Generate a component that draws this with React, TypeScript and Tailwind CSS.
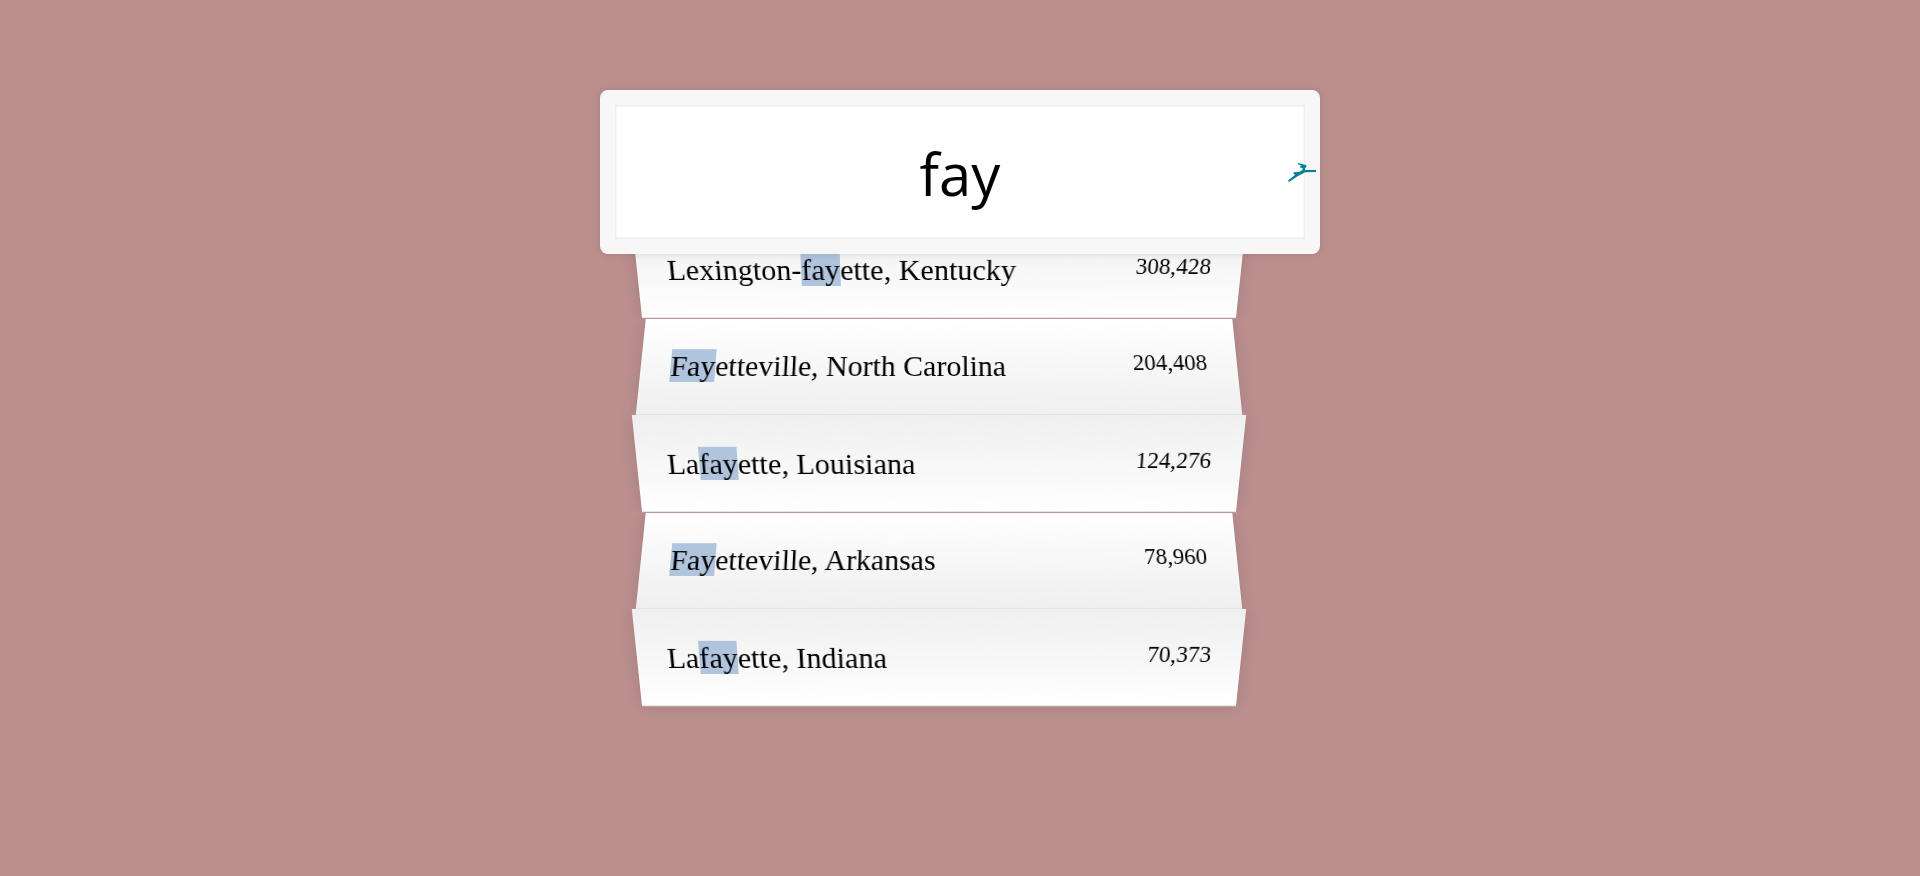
import { useState } from "react";

type Place = { before: string; match: string; after: string; population: string };

const places: Place[] = [
  { before: "Lexington-", match: "fay", after: "ette, Kentucky", population: "308,428" },
  { before: "", match: "Fay", after: "etteville, North Carolina", population: "204,408" },
  { before: "La", match: "fay", after: "ette, Louisiana", population: "124,276" },
  { before: "", match: "Fay", after: "etteville, Arkansas", population: "78,960" },
  { before: "La", match: "fay", after: "ette, Indiana", population: "70,373" },
];

function Suggestion({ place }: { place: Place }) {
  return (
    <li className="flex items-start justify-between border-b border-[#d8d8d8] p-[30px] shadow-[0_0_15px_rgba(0,0,0,0.14)] [clip-path:inset(0_-20px)] last:[clip-path:inset(0_-20px_-20px)] odd:bg-linear-to-t odd:from-white odd:to-[#efefef] odd:[transform:perspective(150px)_rotateX(-3deg)_translateY(4px)_scale(1.008)] even:bg-linear-to-b even:from-white even:to-[#efefef] even:[transform:perspective(150px)_rotateX(3deg)_translateY(3px)_scale(0.993)]">
      <span className="text-[30px] leading-9">
        {place.before}
        <mark className="bg-[#b0c4de] text-black">{place.match}</mark>
        {place.after}
      </span>
      <span className="text-[23px] leading-[30px]">{place.population}</span>
    </li>
  );
}

function Bird() {
  return (
    <svg
      className="pointer-events-none absolute right-1 top-[73px] h-5 w-7"
      viewBox="0 0 28 20"
      fill="#007f99"
      aria-hidden="true"
    >
      <path d="M10 0 L18 2 L18.500 4 L17 5 L17 7 L28 7 L28 9 L17 9.200 L14 11 L10 13 L1 19 L0 17.500 L7 12 L5.500 10.500 L5.500 9.300 L11 9 L14.500 7 L14.500 5 L12 4.500 L12 3.300 L14 3 L10 1.300 Z" />
    </svg>
  );
}

export default function App() {
  const [query, setQuery] = useState("fay");

  return (
    <main className="min-h-screen bg-[#bc8f8f] px-4 pt-[90px] font-['Liberation_Serif',serif] text-black">
      <form className="mx-auto max-w-[720px]" onSubmit={(e) => e.preventDefault()}>
        <div className="relative z-10">
          <input
            type="text"
            aria-label="City or State"
            placeholder="City or State"
            spellCheck={false}
            value={query}
            onChange={(e) => setQuery(e.target.value)}
            className="block h-[164px] w-full rounded-lg border-[15px] border-[#f7f7f7] bg-white px-[30px] pt-[2px] text-center font-['Open_Sans',sans-serif] text-[58px] shadow-[0_0_8px_rgba(0,0,0,0.12),inset_0_0_3px_rgba(0,0,0,0.19)] outline-none"
          />
          <Bird />
        </div>
        <ul className="-mt-9 pl-[39px] pr-[81px]">
          {places.map((place) => (
            <Suggestion key={place.population} place={place} />
          ))}
        </ul>
      </form>
    </main>
  );
}
